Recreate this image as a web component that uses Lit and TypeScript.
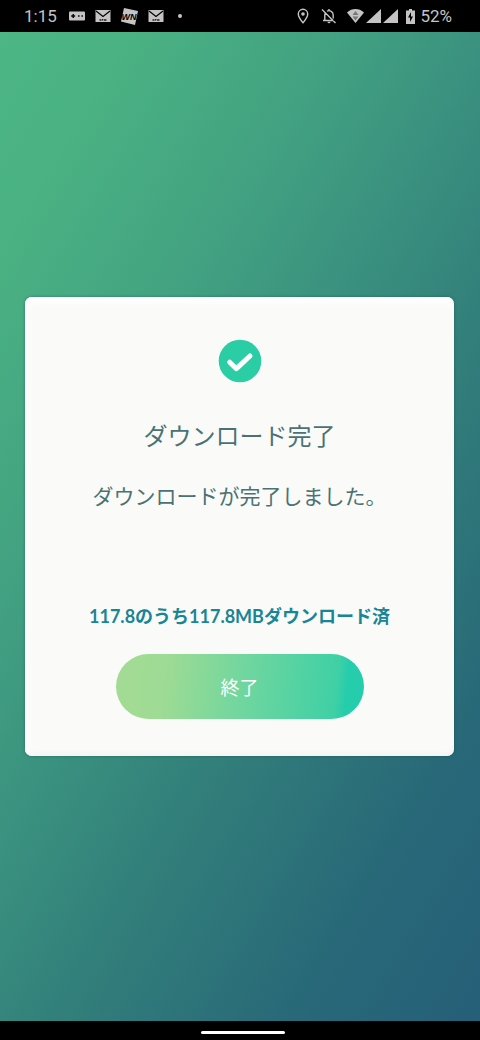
import { LitElement, html, css, svg } from "lit";
import { customElement } from "lit/decorators.js";

const mail = svg`
  <path fill="#c4c4c4" d="M.5 2h15v12H.5z"/>
  <path fill="none" stroke="#000" stroke-width="1.2" d="M1 3l7 5.500L15 3"/>
  <path fill="none" stroke="#222" stroke-width="1.500" d="M4.500 12h2M7 11.700h1.400M9 12h2.500"/>
`;

@customElement("status-bar")
export class StatusBar extends LitElement {
  static styles = css`
    :host {
      display: flex;
      align-items: center;
      justify-content: space-between;
      height: 32px;
      padding: 0 28px 0 24px;
      background: #000;
      color: #c4c4c4;
      font: 17px/32px Roboto, sans-serif;
    }
    .group {
      display: flex;
      align-items: center;
    }
    .notices {
      gap: 10px;
    }
    .time {
      margin-right: 2px;
    }
    .dot {
      width: 4px;
      height: 4px;
      margin-left: 4px;
      border-radius: 50%;
      background: #c4c4c4;
    }
    .system {
      gap: 2px;
    }
    .pin {
      margin-right: 10px;
    }
    .bell {
      margin-right: 8px;
    }
    .battery {
      margin: 0 3px 0 6px;
    }
    .badge {
      font: italic 700 9px "Liberation Sans", sans-serif;
    }
    svg {
      display: block;
    }
  `;

  render() {
    return html`
      <div class="group notices">
        <span class="time">1:15</span>
        <svg width="16" height="16" viewBox="0 0 16 16" aria-hidden="true">
          <rect y="3.500" width="16" height="9" rx="1" fill="#c4c4c4" />
          <path d="M2.200 8h4M4.200 6v4" stroke="#000" stroke-width="1.400" />
          <path d="M9 7.300h1.600v1.400H9zM12.400 7.300H14v1.400h-1.600z" fill="#111" />
        </svg>
        <svg width="16" height="16" viewBox="0 0 16 16" aria-hidden="true">${mail}</svg>
        <svg width="17" height="17" viewBox="0 0 17 17" aria-hidden="true">
          <path d="M3 0l14 3-3 14L0 13.500z" fill="#c4c4c4" />
          <text class="badge" x="8" y="12" text-anchor="middle" fill="#000">WN</text>
        </svg>
        <svg width="16" height="16" viewBox="0 0 16 16" aria-hidden="true">${mail}</svg>
        <span class="dot"></span>
      </div>
      <div class="group system">
        <svg class="pin" width="12" height="16" viewBox="0 0 12 16" fill="none" aria-hidden="true">
          <path
            d="M6 14.700C3 11.300 1.300 8.500 1.300 6a4.700 4.700 0 0 1 9.400 0c0 2.500-1.700 5.300-4.700 8.700z"
            stroke="#c4c4c4"
            stroke-width="1.400"
          />
          <circle cx="6" cy="6" r="1.800" fill="#c4c4c4" />
        </svg>
        <svg class="bell" width="16" height="16" viewBox="0 0 16 16" fill="none" aria-hidden="true">
          <path
            d="M2 12.500h10.500M3.800 12V7.200c0-1 .2-1.800.7-2.500M6 3.200c2.800-1.500 6.200.4 6.200 4v3.300M8 1v1.500M1 1.500l13.500 13.500"
            stroke="#c4c4c4"
            stroke-width="1.400"
          />
          <path d="M6.500 13.800h3a1.500 1.500 0 0 1-3 0z" fill="#c4c4c4" />
        </svg>
        <svg width="17" height="14" viewBox="0 0 17 14" aria-hidden="true">
          <path d="M0 3.500C5-1.100 12-1.100 17 3.500L8.500 14z" fill="#c4c4c4" />
          <path d="M8.500 2l3 4h-6zM5.500 7.500h6l-3 4z" fill="#777" />
        </svg>
        <svg width="15" height="14" viewBox="0 0 15 14" aria-hidden="true">
          <path d="M15 0v14H0z" fill="#c4c4c4" />
        </svg>
        <svg width="15" height="14" viewBox="0 0 15 14" aria-hidden="true">
          <path d="M15 0v14H0z" fill="#c4c4c4" />
        </svg>
        <svg class="battery" width="9" height="15" viewBox="0 0 9 15" aria-hidden="true">
          <path d="M3 0h3v1.500h3V15H0V1.500h3z" fill="#c4c4c4" />
          <path d="M5 3L2 8.500h2V13l3-5.500H5z" fill="#000" />
        </svg>
        <span>52%</span>
      </div>
    `;
  }
}

@customElement("download-dialog")
export class DownloadDialog extends LitElement {
  static styles = css`
    :host {
      display: block;
      font-family: Lato, "Noto Sans CJK JP", sans-serif;
    }
    .card {
      display: flex;
      flex-direction: column;
      align-items: center;
      padding: 42px 16px 37px;
      border-radius: 7px;
      background: #fafbf9;
      box-shadow:
        0 0 3px rgba(20, 70, 60, 0.5),
        inset 0 8px 8px -3px #fff,
        inset 6px 0 8px -4px #fff,
        inset 0 -4px 6px -3px #eeeeea;
      text-align: center;
    }
    .check {
      display: block;
    }
    h1,
    p {
      margin: 0;
      font-weight: 400;
      color: #4a7275;
    }
    h1 {
      margin-top: 35px;
      font-size: 24px;
      line-height: 36px;
    }
    .message {
      margin-top: 24px;
      font-size: 21px;
      line-height: 36px;
    }
    .amount {
      margin-top: 84px;
      font-size: 18px;
      line-height: 36px;
      font-weight: 700;
      color: #198595;
    }
    button {
      width: 100%;
      max-width: 248px;
      height: 65px;
      margin-top: 20px;
      padding: 0;
      border: 0;
      border-radius: 33px;
      background: linear-gradient(96deg, #a4db94 0%, #9edb94 20%, #6fd69f 52%, #3fd0a5 88%, #25cdac 92%);
      color: #fff;
      font: 400 19px/28px "Noto Sans CJK JP", sans-serif;
    }
  `;

  render() {
    return html`
      <section class="card" role="dialog" aria-labelledby="title">
        <svg class="check" width="44" height="44" viewBox="0 0 44 44" aria-hidden="true">
          <circle cx="22" cy="22" r="21.300" fill="#2bcda5" />
          <path
            d="M11.700 23.200l6.700 6.500L32 17"
            fill="none"
            stroke="#fff"
            stroke-width="5"
            stroke-linecap="round"
            stroke-linejoin="round"
          />
        </svg>
        <h1 id="title">ダウンロード完了</h1>
        <p class="message">ダウンロードが完了しました。</p>
        <p class="amount">117.8のうち117.8MBダウンロード済</p>
        <button type="button">終了</button>
      </section>
    `;
  }
}

@customElement("app-root")
export class AppRoot extends LitElement {
  static styles = css`
    :host {
      display: flex;
      flex-direction: column;
      min-height: 100vh;
    }
    main {
      flex: 1;
      display: grid;
      align-items: center;
      padding: 0 26px 0 25px;
      background: linear-gradient(
        121deg,
        #4db685 0%,
        #4ab283 12%,
        #42a181 32%,
        #3a917f 46%,
        #33817b 59%,
        #286878 83%,
        #265f78 100%
      );
    }
    .nav {
      display: flex;
      align-items: center;
      justify-content: center;
      height: 19px;
      padding: 4px 0 0 6px;
      box-sizing: border-box;
      background: #000;
    }
    .handle {
      width: 84px;
      height: 3px;
      border-radius: 2px;
      background: #fff;
    }
  `;

  render() {
    return html`
      <status-bar></status-bar>
      <main><download-dialog></download-dialog></main>
      <div class="nav"><span class="handle"></span></div>
    `;
  }
}
